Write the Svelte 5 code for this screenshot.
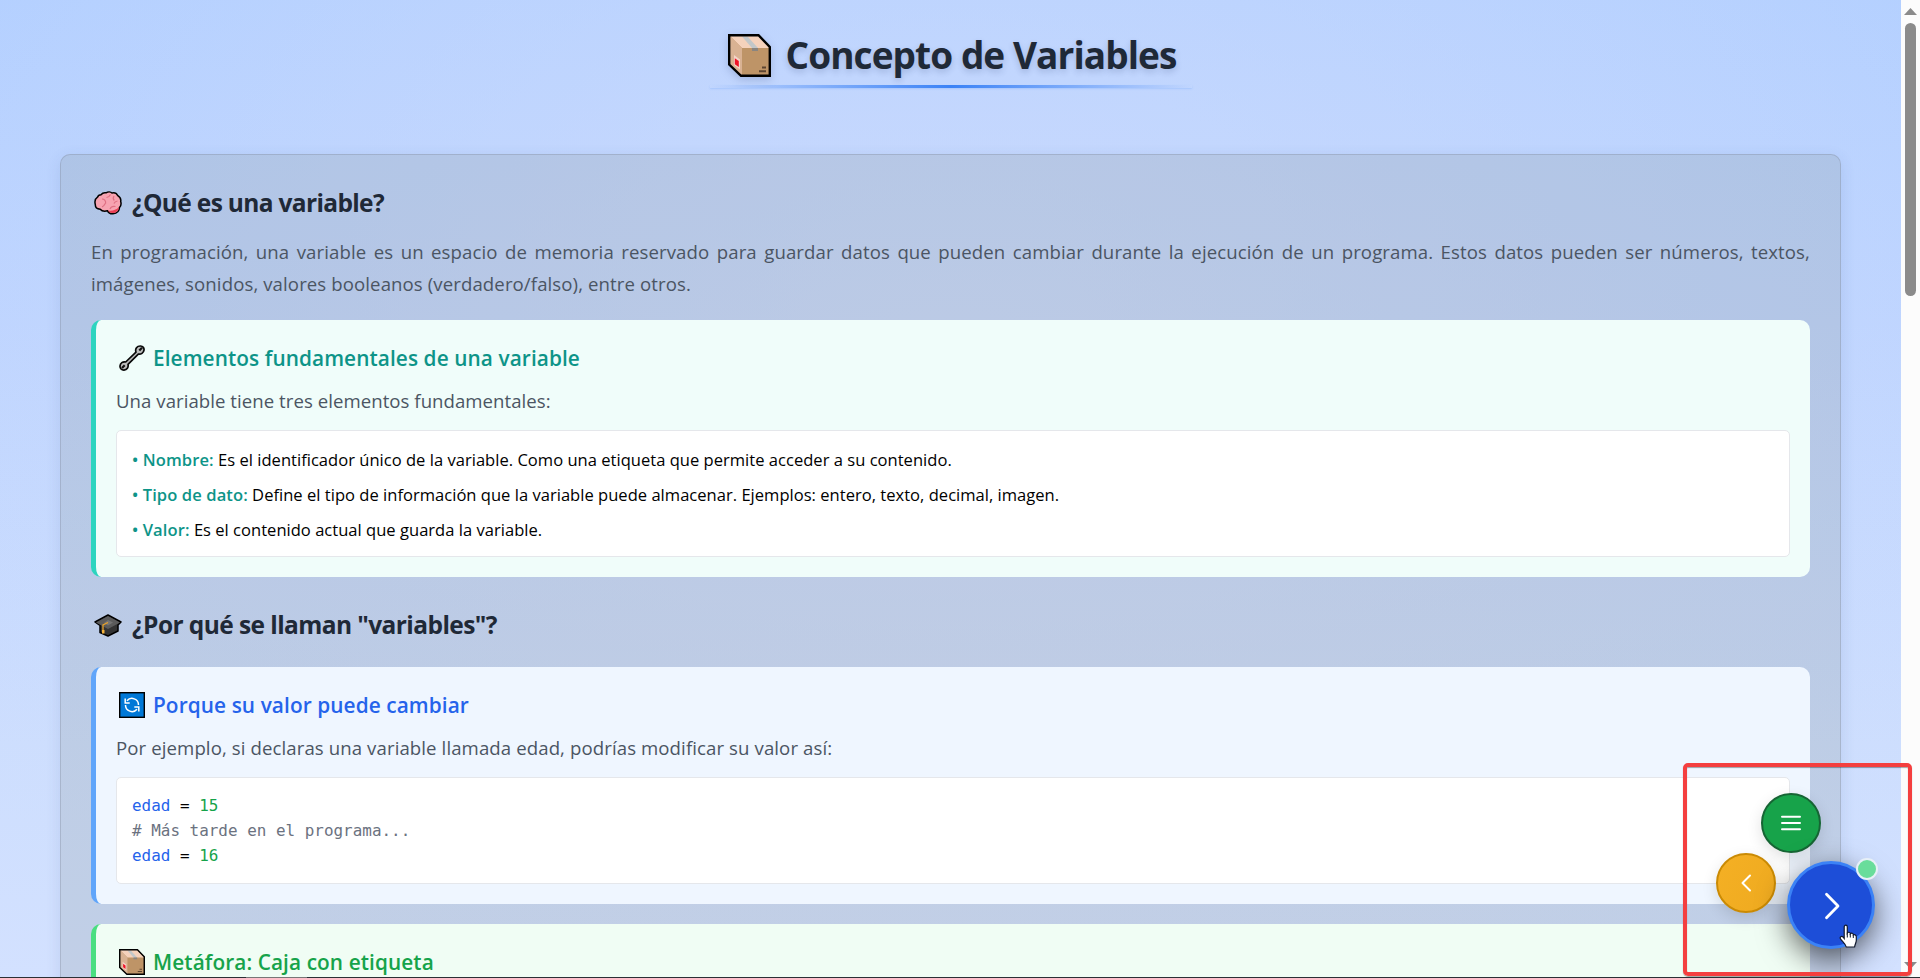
<script>
  const elements = [
    ['Nombre:', 'Es el identificador único de la variable. Como una etiqueta que permite acceder a su contenido.'],
    ['Tipo de dato:', 'Define el tipo de información que la variable puede almacenar. Ejemplos: entero, texto, decimal, imagen.'],
    ['Valor:', 'Es el contenido actual que guarda la variable.']
  ];
</script>

{#snippet box()}
  <svg class="emoji" viewBox="0 0 43 43">
    <path d="M1.2 1.2H30.5L41.8 13V41.8H13L1.2 30.5Z" fill="#be9467" />
    <path d="M1.5 1.5H30.5L41.5 14H14Z" fill="#f5d2bc" />
    <path d="M1.5 1.5L14 14V42L1.5 30.5Z" fill="#d9b293" />
    <path d="M14 2.500H19.5L30 14H24Z" fill="#c2c7c9" />
    <path d="M24 14h6v3h-6z" fill="#8a8580" />
    <path d="M6 21l6 4.5v10L6 31z" fill="#f4d4c8" />
    <path d="M6.8 24.3l4 2.8v6l-4-2.8z" fill="#f01428" />
    <path d="M34 33.5h4M31 37.2h7" stroke="#5c4431" stroke-width="2" />
    <path d="M1.2 1.2H30.5L41.8 13V41.8H13L1.2 30.5Z" fill="none" stroke="#000" stroke-width="2.4" />
  </svg>
{/snippet}

<div class="screen">
  <main>
    <header>
      <h1>{@render box()}<span>Concepto de Variables</span></h1>
      <div class="rule"></div>
    </header>

    <section class="card">
      <h2>
        <svg class="emoji" viewBox="0 0 28 24">
          <path d="M7 3.7C8.5 1.8 10.5 1.5 12 1.8c2-1.3 4.8-1.1 6 .2 2.5-.5 4.700.5 5.500 2.300 2.500 1.500 3.700 3.700 3.200 6.200.8 2.500.2 4.500-1.200 6-.2 3.500-2.800 6-6.500 6.300-2.700.2-4.500-1-5.500-3-3 .8-5.800.2-7.300-1.600C3 18 1.200 16 1.300 13.500.5 10.500 1.500 7.500 3.500 6.200 4 4.700 5.300 3.800 7 3.700Z" fill="#f7a3b1" stroke="#000" stroke-width="1.500" />
          <path d="M14 19.500c4 .6 8-.3 11-3.500-.5 4-3 6-6.500 6-2.300 0-3.800-.9-4.500-2.500Z" fill="#ea3f54" />
          <path d="M8 8c2.200 0 4 1.800 3.600 4.300M11.500 12c-1 1.700-1.500 3.500-3.500 4M12.500 6.500c2-.2 3-1 4-3M20 5c-1 1.500-1.200 3 .3 4.500M23.500 10c-2 .2-3 1-3.500 2.500M16 18c1-2.500 3-3 5.500-2.500" fill="none" stroke="#df7184" stroke-width="1.200" />
        </svg>
        <span>¿Qué es una variable?</span>
      </h2>
      <p class="lead">En programación, una variable es un espacio de memoria reservado para guardar datos que pueden cambiar durante la ejecución de un programa. Estos datos pueden ser números, textos, imágenes, sonidos, valores booleanos (verdadero/falso), entre otros.</p>

      <article class="box teal">
        <h3>
          <svg class="emoji" viewBox="0 0 26 26">
            <path d="M17 7.200C15.800 3.800 18 .9 21.500 1 24 1.200 25.300 3 25 5.200 24.600 8 22 9.600 19.300 9.100L9 19.400C9.700 22.300 8 25 5 25.100 2.500 25.200.9 23.500 1 21 1.200 18 3.800 16.400 6.700 17Z" fill="#bcbcbc" stroke="#080808" stroke-width="1.700" stroke-linejoin="round" />
            <path d="M23 2.800L20.300 5.600M3 23L5.700 20.300" stroke="#111" stroke-width="2.200" />
          </svg>
          <span>Elementos fundamentales de una variable</span>
        </h3>
        <p>Una variable tiene tres elementos fundamentales:</p>
        <div class="inner list">
          {#each elements as [name, text]}
            <div><b>• {name}</b> {text}</div>
          {/each}
        </div>
      </article>

      <h2 class="second">
        <svg class="emoji" viewBox="0 0 28 24">
          <path d="M14 2L27 9 24 12V18L14 23 6 19.500V12.500L1 9Z" fill="#333" stroke="#000" stroke-width="1.500" stroke-linejoin="round" />
          <path d="M14 3L26 9.500 14 16 2 9.500Z" fill="#5b5b5b" />
          <path d="M14 7L19 9.500 14 12.500 10 10Z" fill="#747474" />
          <path d="M14 9.500L9 12V20" fill="none" stroke="#e9a229" stroke-width="1.300" />
          <path d="M8 17h2.500v3.500H8z" fill="#f4b33b" />
        </svg>
        <span>¿Por qué se llaman "variables"?</span>
      </h2>

      <article class="box blue">
        <h3>
          <svg class="emoji" viewBox="0 0 26 26">
            <rect x=".7" y=".7" width="24.600" height="24.600" fill="#0078d7" stroke="#000" stroke-width="1.400" />
            <path d="M8 8.800A6.500 6.500 0 0 1 19.500 13M18 17.200A6.500 6.500 0 0 1 6.500 13" fill="none" stroke="#fff" stroke-width="1.500" />
            <path d="M6.200 6.500v4.500h4.500M19.800 19.500v-4.500h-4.500" fill="none" stroke="#fff" stroke-width="1.500" />
          </svg>
          <span>Porque su valor puede cambiar</span>
        </h3>
        <p>Por ejemplo, si declaras una variable llamada edad, podrías modificar su valor así:</p>
        <div class="inner code">
          <div><i>edad</i> = <em>15</em></div>
          <div class="note"># Más tarde en el programa...</div>
          <div><i>edad</i> = <em>16</em></div>
        </div>
      </article>

      <article class="box green">
        <h3>{@render box()}<span>Metáfora: Caja con etiqueta</span></h3>
      </article>
    </section>
  </main>

  <aside class="scrollbar">
    <svg width="13" height="7" viewBox="0 0 13 7"><path d="M0 7L6.500 0 13 7Z" fill="#8b8b8b" /></svg>
    <div class="thumb"></div>
    <svg class="down" width="13" height="7" viewBox="0 0 13 7"><path d="M0 0L6.500 7 13 0Z" fill="#8b8b8b" /></svg>
  </aside>

  <button class="fab menu" aria-label="Menú">
    <svg width="20" height="16" viewBox="0 0 20 16"><path d="M1 1.700h18M1 8h18M1 14.300h18" /></svg>
  </button>
  <button class="fab prev" aria-label="Anterior">
    <svg width="12" height="18" viewBox="0 0 12 18"><path d="M10 1.500L2.500 9 10 16.500" /></svg>
  </button>
  <button class="fab next" aria-label="Siguiente">
    <svg width="18" height="28" viewBox="0 0 18 28"><path d="M3.500 2.300L15 14 3.500 25.700" /></svg>
    <span class="dot"></span>
  </button>
  <svg class="cursor" width="19" height="24" viewBox="0 0 19 24">
    <path d="M5.200 14.500V3C5.200.5 8.300.5 8.300 3V9C9 7.800 11.300 8 11.300 9.800 12.500 8.700 14.300 9.200 14.300 10.900 15.800 10.300 17.300 11.300 17.300 13V16.500C17.300 18.500 16 19.700 15.600 23H7.300C6.700 20 3.700 17.800 1.500 14.800.4 13 2.600 11.700 4 13Z" fill="#fff" stroke="#10182c" stroke-width="1.200" />
    <path d="M8.300 8.500v5M11.300 10v3.500M14.300 11v3" stroke="#10182c" stroke-width="1" />
  </svg>
  <div class="marker"></div>
  <div class="edge"></div>
</div>

<style>
  :global(body) { margin: 0; overflow: hidden; }
  .screen {
    position: relative; display: flex; width: 1920px; height: 978px; overflow: hidden;
    font-family: "Open Sans", "Noto Sans", sans-serif;
  }
  main {
    flex: 1; height: 978px; overflow: hidden; box-sizing: border-box; padding: 0 60px;
    background:
      radial-gradient(ellipse 60% 80% at 50% 40%, rgba(214, 223, 252, .6), rgba(214, 223, 252, 0)),
      linear-gradient(180deg, #b4d0ff 0%, #bdd4ff 33%, #cddefe 76%, #d3e1ff 100%);
  }
  header { height: 154px; box-sizing: border-box; padding-top: 30px; display: flex; flex-direction: column; align-items: center; }
  h1, h2, h3, p { margin: 0; }
  h1, h2, h3 { display: flex; align-items: center; white-space: nowrap; }
  .emoji { flex: none; display: block; }
  h1 { height: 50px; line-height: 50px; font-size: 37px; font-weight: 700; letter-spacing: -.93px; color: #1f2937; gap: 15px; padding-left: 3px; text-shadow: 0 3px 6px rgba(30, 50, 100, .2); }
  h1 .emoji { width: 43px; height: 43px; filter: drop-shadow(0 3px 4px rgba(30, 50, 100, .2)); }
  .rule { width: 482px; height: 3px; margin-top: 5px; background: linear-gradient(90deg, transparent, #3b82f6, transparent); box-shadow: 0 1px 2px rgba(59, 130, 246, .2); }
  .card {
    box-sizing: border-box; height: 900px; padding: 30px; border: 1px solid rgba(120, 130, 150, .32); border-radius: 10px;
    background: rgba(120, 135, 130, .19); box-shadow: 0 4px 15px rgba(50, 80, 140, .12);
  }
  h2 { height: 36px; line-height: 38px; font-size: 24.500px; font-weight: 700; letter-spacing: -.66px; color: #1f2937; gap: 10px; padding-left: 3px; }
  h2 .emoji { width: 28px; height: 24px; }
  .lead { margin: 15px 0 20px; text-align: justify; }
  p { font-size: 18.600px; line-height: 32px; color: #4b5563; letter-spacing: .1px; }
  .box { box-sizing: border-box; padding: 20px; border-left: 5px solid; border-radius: 10px; margin-bottom: 20px; }
  .teal { background: #f0fdfa; border-color: #2dd4bf; }
  .teal h3 { color: #0d9488; }
  .teal p { letter-spacing: .05px; }
  .blue { background: #eff6ff; border-color: #60a5fa; }
  .blue h3 { color: #2563eb; }
  .green { background: #f0fdf4; border-color: #4ade80; height: 300px; }
  .green h3 { color: #16a34a; }
  h3 { height: 35px; line-height: 36px; font-size: 20.800px; font-weight: 600; letter-spacing: .09px; margin-bottom: 10px; gap: 8px; padding-left: 3px; }
  h3 .emoji { width: 26px; height: 26px; }
  .inner { box-sizing: border-box; margin-top: 13px; border: 1px solid #e5e7eb; border-radius: 5px; background: #fff; }
  .list { padding: 11px 15px 9px; font-size: 16.550px; line-height: 35px; letter-spacing: .02px; color: #000; }
  .list b { color: #0d9488; font-weight: 600; letter-spacing: .1px; }
  .code { padding: 15px; font: 15.950px/25px "DejaVu Sans Mono", "Liberation Mono", monospace; color: #000; }
  .code i, .code em { font-style: normal; }
  .code i { color: #2563eb; }
  .code em { color: #16a34a; }
  .note { color: #6b7280; }
  .second { margin: 30px 0 24px; letter-spacing: -.58px; }
  .scrollbar { width: 19px; height: 978px; box-sizing: border-box; padding: 8px 0 9px; background: #fcfcfc; display: flex; flex-direction: column; align-items: center; flex: none; }
  .scrollbar svg { display: block; flex: none; }
  .thumb { width: 11px; height: 273px; margin-top: 8px; border-radius: 6px; background: #8b8b8b; }
  .down { margin-top: auto; }
  .fab {
    position: absolute; box-sizing: border-box; width: 60px; height: 60px; padding: 0; border-radius: 50%;
    display: flex; align-items: center; justify-content: center; box-shadow: 0 5px 15px rgba(0, 0, 0, .12);
  }
  .fab path { fill: none; stroke: #fff; stroke-width: 2; stroke-linecap: round; stroke-linejoin: round; }
  .menu { left: 1761px; top: 793px; background: #17a34a; border: 2px solid #166534; }
  .prev { left: 1716px; top: 853px; background: linear-gradient(120deg, #f5b024, #eeaa20); border: 2px solid #ca8a04; }
  .next { left: 1787px; top: 861px; width: 88px; height: 88px; background: #1d4ed8; border: 3px solid #3b82f6; box-shadow: 0 10px 30px rgba(0, 0, 0, .6); }
  .next svg { transform: translate(1px, 1px); }
  .next path { stroke-width: 2.800; }
  .dot { position: absolute; right: -6px; top: -6px; box-sizing: border-box; width: 22px; height: 22px; border: 2px solid #e7f0f7; border-radius: 50%; background: #69dd9b; }
  .cursor { position: absolute; left: 1839px; top: 924px; }
  .marker { position: absolute; left: 1683px; top: 763px; width: 229px; height: 213px; box-sizing: border-box; border: 4px solid #f43f3f; border-radius: 5px; box-shadow: 0 1px 1px rgba(0, 0, 0, .35), inset 0 1px 1px rgba(0, 0, 0, .35); }
  .edge { position: absolute; left: 0; right: 0; bottom: 0; height: 1px; background: linear-gradient(90deg, #2b3035 246px, #777 246px, #777 307px, #2b3035 307px); }
</style>
